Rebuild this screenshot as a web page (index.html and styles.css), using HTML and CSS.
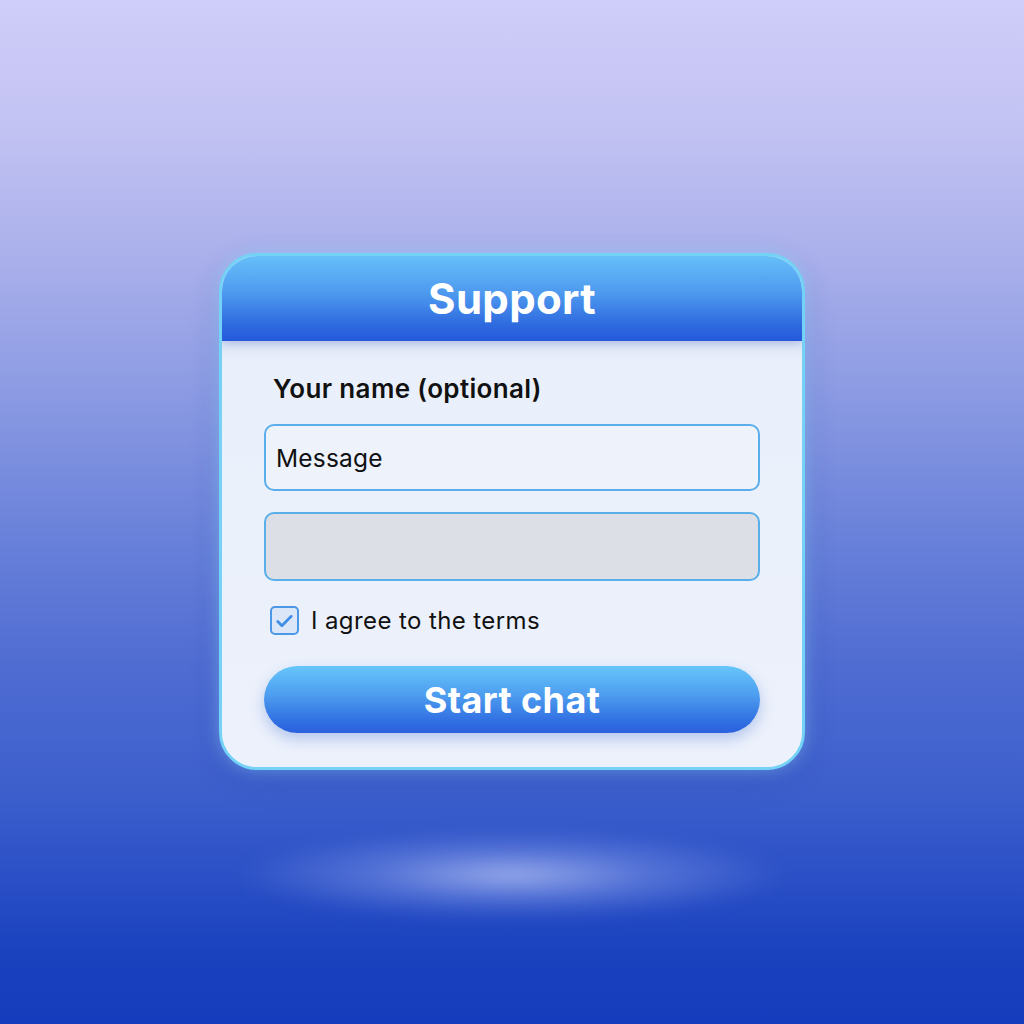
FILE: index.html
```html
<!DOCTYPE html>
<html lang="en">
<head>
<meta charset="utf-8">
<title>Support</title>
<link rel="stylesheet" href="styles.css">
</head>
<body>
<div class="stage">
  <div class="card">
    <div class="card-header">Support</div>
    <div class="card-body">
      <div class="label">Your name (optional)</div>
      <div class="field">Message</div>
      <div class="field field-empty"></div>
      <div class="check-row">
        <span class="checkbox">
          <svg viewBox="0 0 24 24" width="26" height="26"><path d="M5.5 12.5l4 4L18.5 7.5" fill="none" stroke="#3f8ee8" stroke-width="2.6" stroke-linecap="round" stroke-linejoin="round"/></svg>
        </span>
        <span class="check-text">I agree to the terms</span>
      </div>
      <div class="button">Start chat</div>
    </div>
  </div>
  <div class="glow"></div>
</div>
</body>
</html>
```
FILE: styles.css
```css
html, body {
  margin: 0;
  padding: 0;
}
body {
  width: 1024px;
  height: 1024px;
  overflow: hidden;
  font-family: Inter, "Liberation Sans", Arial, sans-serif;
  background: linear-gradient(180deg, #cfcdf9 0%, #c3c3f3 12%, #aab0eb 25%, #8c9be3 38%, #6a82da 52%, #4f6cd2 65%, #3b5ecc 78%, #2a4fc6 86%, #1a42bf 93%, #143cbc 100%);
}
.stage {
  position: relative;
  width: 1024px;
  height: 1024px;
  display: flex;
  flex-direction: column;
  align-items: center;
  padding-top: 253px;
  box-sizing: border-box;
}
.card {
  width: 586px;
  box-sizing: border-box;
  border: 3px solid #74d2f7;
  border-radius: 38px;
  background: #ebf0fb;
  overflow: hidden;
  box-shadow: 0 0 18px rgba(150, 220, 255, 0.45), 0 10px 30px rgba(30, 50, 150, 0.18);
}
.card-header {
  height: 85px;
  background: linear-gradient(180deg, #66bff8 0%, #4d98ef 45%, #2f6be0 80%, #2559dc 100%);
  color: #fff;
  font-weight: 700;
  font-size: 42px;
  display: flex;
  align-items: center;
  justify-content: center;
  letter-spacing: 0.3px;
  box-shadow: 0 3px 8px rgba(40, 80, 180, 0.25);
  position: relative;
}
.card-body {
  padding: 32px 42px 34px 42px;
  display: flex;
  flex-direction: column;
  background: linear-gradient(180deg, #dfe6f6 0px, #eaf0fb 22px, #ecf1fb 100%);
}
.label {
  font-size: 26px;
  font-weight: 600;
  letter-spacing: 0.35px;
  color: #111;
  padding-left: 9px;
  line-height: 32px;
}
.field {
  margin-top: 19px;
  height: 67px;
  box-sizing: border-box;
  border: 2px solid #5aaeea;
  border-radius: 10px;
  background: #edf2fb;
  display: flex;
  align-items: center;
  padding-left: 10px;
  font-size: 24.5px;
  letter-spacing: 0.2px;
  color: #111;
}
.field-empty {
  margin-top: 21px;
  height: 69px;
  background: #dcdfe6;
}
.check-row {
  margin-top: 25px;
  display: flex;
  align-items: center;
  padding-left: 6px;
}
.checkbox {
  width: 29px;
  height: 29px;
  box-sizing: border-box;
  border: 2px solid #4c97e6;
  border-radius: 5px;
  background: #dbe7f8;
  display: flex;
  align-items: center;
  justify-content: center;
}
.check-text {
  margin-left: 12px;
  font-size: 24px;
  letter-spacing: 0.4px;
  color: #111;
}
.button {
  margin-top: 31px;
  height: 67px;
  border-radius: 34px;
  background: linear-gradient(180deg, #66c6fa 0%, #4c9bef 45%, #2f6ce1 85%, #2a60dd 100%);
  color: #fff;
  font-weight: 700;
  font-size: 36px;
  letter-spacing: 0.4px;
  display: flex;
  align-items: center;
  justify-content: center;
  box-shadow: 0 6px 14px rgba(40, 90, 210, 0.28);
}
.glow {
  position: absolute;
  left: 232px;
  top: 830px;
  width: 560px;
  height: 90px;
  border-radius: 50%;
  background: radial-gradient(ellipse at center, rgba(200, 210, 250, 0.7) 0%, rgba(150, 170, 240, 0.38) 35%, rgba(100, 130, 230, 0) 70%);
  filter: blur(8px);
}
```
